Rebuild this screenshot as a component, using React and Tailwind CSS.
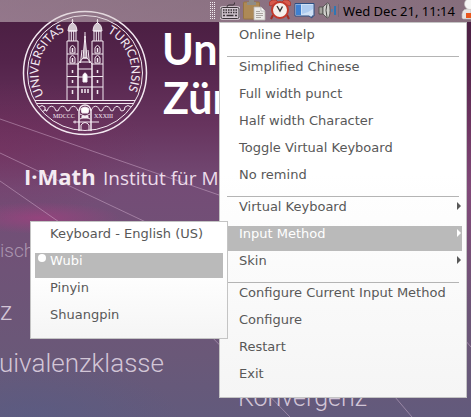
const MENU = [
  [{ label: "Online Help" }],
  [
    { label: "Simplified Chinese" },
    { label: "Full width punct" },
    { label: "Half width Character" },
    { label: "Toggle Virtual Keyboard" },
    { label: "No remind" },
  ],
  [
    { label: "Virtual Keyboard", arrow: true },
    {
      label: "Input Method",
      arrow: true,
      active: true,
      children: [
        { label: "Keyboard - English (US)" },
        { label: "Wubi", active: true, checked: true },
        { label: "Pinyin" },
        { label: "Shuangpin" },
      ],
    },
    { label: "Skin", arrow: true },
  ],
  [
    { label: "Configure Current Input Method" },
    { label: "Configure" },
    { label: "Restart" },
    { label: "Exit" },
  ],
];

const PANEL = "border border-[#c4c4c4] bg-linear-to-b from-white from-40% to-[#f5f5f5] px-1 pt-1 pb-1.5";

function MenuItem({ item }) {
  return (
    <li role="none" className="relative mb-0.5 last:mb-0">
      <button
        type="button"
        role={item.checked ? "menuitemradio" : "menuitem"}
        aria-checked={item.checked ? true : undefined}
        aria-haspopup={item.arrow ? "menu" : undefined}
        className={`relative flex h-[25px] w-full items-start pl-[15px] text-left whitespace-nowrap leading-[15px] ${
          item.active ? "bg-[#bababa] text-white" : "text-[#585858]"
        }`}
      >
        {item.checked && <span className="absolute top-[1px] left-[3px] size-2 rounded-full bg-white" />}
        <span className="grow">{item.label}</span>
        {item.arrow && (
          <svg viewBox="0 0 4 8" className="mt-[3px] mr-px h-2 w-1" fill="currentColor">
            <path d="M0 0 L4 4 L0 8 Z" />
          </svg>
        )}
      </button>
      {item.children && (
        <ul role="menu" aria-label={item.label} className={`absolute -top-[5px] right-full -mr-1 w-[198px] ${PANEL}`}>
          {item.children.map((child) => (
            <MenuItem key={child.label} item={child} />
          ))}
        </ul>
      )}
    </li>
  );
}

function Tower({ x }) {
  return (
    <g transform={`translate(${x} 0)`}>
      <path d="M0 100 V41 H11 V100 M2 41 V31 H9 V41 M4.300 31 V41 M6.700 31 V41 M0 54 H11 M0 64 H11 M0 76.500 H11 M0 87 H11" />
      <path d="M1 31 Q1.500 24 5.500 23 Q9.500 24 10 31 Z" fill="#fff" fillOpacity=".75" />
      <path d="M5.500 23 V19 M4.500 21 H6.500" />
      <path d="M3 53 V48 Q5.500 43 8 48 V53 Z M3 63 V58 Q5.500 53 8 58 V63 Z" />
      <path d="M5.500 48 V52 M5.500 58 V62 M5.500 70 V73 M5.500 80 V83 M5.500 90 V94" strokeWidth="1.500" />
    </g>
  );
}

function Seal() {
  return (
    <g fill="none" stroke="#f4eaf2" strokeWidth="1">
      <circle cx="85" cy="73" r="61.500" strokeWidth="1.500" />
      <circle cx="85" cy="73" r="57.500" />
      <Tower x="67" />
      <Tower x="92" />
      {/* nave and spire between the towers */}
      <path d="M78 100 V64 L83 58 H87 L92 64 V100 M78 69 H92 M78 77 H92 M78 87 H92 M79 62 H91" />
      <path d="M83 58 L85 36 L87 58 Z" fill="#fff" fillOpacity=".6" />
      <path d="M85 38 V32 M80.500 63 L82 50 M89.500 63 L88 50" />
      <path d="M83 82 V75 Q85 71 87 75 V82 Z" fill="#fff" />
      <path d="M82 89 V93 M85 89 V93 M88 89 V93" strokeWidth="1.500" />
      {/* bridge */}
      <path d="M35 100.500 H135 M37 103.500 H133" />
      <path d="M39 107 Q42 104 45 107 V110 Q45 111 43 111 M47 111 Q45 111 45 109 M46 111 Q48 111 48 108.500 Q51.500 104 55 108.500 Q55 111 57 111 Q59 111 59 108.500 Q62.500 104 66 108.500 Q66 111 68 111 Q70 111 70 108.500 Q73.500 104 77 108.500 L78 111" />
      <path d="M131 107 Q128 104 125 107 Q125 111 122 111 Q120 111 120 108.500 Q117 104 114 108.500 Q114 111 112 111 Q110 111 110 108.500 Q106.500 104 103 108.500 Q103 111 101 111 Q99 111 99 108.500 Q95.500 104 92 108.500 L91 111" />
      <path d="M79 131 V111 Q80 105 85 105 Q90 105 91 111 V131" strokeWidth="1.500" />
      <path d="M81 109 Q85 105 89 109 L88 113 H82 Z M82 116 H88 V118 H82 Z" fill="#fff" />
      <path d="M81 131 V125 Q85 120 89 125 V131 M73 122 H99 M75 120.500 V123.500 M80 114 L90 119 M90 114 L80 119" />
      <g fill="#f4eaf2" stroke="none" className="font-['Lato']">
        <path id="seal-left" d="M44 95 A46 46 0 0 1 85 27" fill="none" />
        <path id="seal-right" d="M85 27 A46 46 0 0 1 122 101" fill="none" />
        <text fontSize="12">
          <textPath href="#seal-left" startOffset="0">UNIVERSITAS</textPath>
        </text>
        <text fontSize="12">
          <textPath href="#seal-right" startOffset="23">TURICENSIS</textPath>
        </text>
        <text x="53" y="118" fontSize="6" className="font-['Liberation_Serif']">MDCCC</text>
        <text x="94" y="118" fontSize="6" className="font-['Liberation_Serif']">XXXIII</text>
      </g>
    </g>
  );
}

function Wallpaper() {
  return (
    <svg viewBox="0 0 471 417" preserveAspectRatio="xMinYMin slice" className="absolute inset-0 h-full w-full">
      <defs>
        <linearGradient id="sky" x1="0" y1="0" x2="0" y2="1">
          <stop offset="0" stopColor="#471d3f" />
          <stop offset=".15" stopColor="#54244b" />
          <stop offset=".3" stopColor="#67345e" />
          <stop offset=".45" stopColor="#744c76" />
          <stop offset=".65" stopColor="#6f5377" />
          <stop offset=".85" stopColor="#6a5878" />
          <stop offset="1" stopColor="#625a7c" />
        </linearGradient>
        <radialGradient id="pink">
          <stop offset="0" stopColor="#a63e80" stopOpacity=".65" />
          <stop offset="1" stopColor="#a63e80" stopOpacity="0" />
        </radialGradient>
        <radialGradient id="blue">
          <stop offset="0" stopColor="#585c84" stopOpacity=".7" />
          <stop offset="1" stopColor="#585c84" stopOpacity="0" />
        </radialGradient>
        <radialGradient id="plum">
          <stop offset="0" stopColor="#7d2456" stopOpacity=".35" />
          <stop offset="1" stopColor="#7d2456" stopOpacity="0" />
        </radialGradient>
      </defs>
      <rect width="471" height="417" fill="url(#sky)" />
      <ellipse cx="0" cy="150" rx="150" ry="70" fill="url(#plum)" />
      <ellipse cx="40" cy="218" rx="80" ry="16" fill="url(#pink)" />
      <ellipse cx="30" cy="420" rx="150" ry="60" fill="url(#blue)" />
      <ellipse cx="471" cy="190" rx="30" ry="120" fill="url(#pink)" opacity=".4" />
      <g stroke="#e8c8e4" strokeOpacity=".4">
        <path d="M0 119 L219 195 M0 153 L150 224 M0 181 L62 224 M205 330 L290 417 M395 397 L412 417 M465 340 L471 347" fill="none" />
      </g>
      <Seal />
      <g fill="#fff" fontSize="43" fontWeight="700" className="font-['Lato']">
        <text x="162" y="65">Un</text>
        <text x="163" y="114">Zür</text>
      </g>
      <g className="font-['Open_Sans']">
        <text x="24" y="185" fontSize="22" fontWeight="700" fill="#f4ebf2">I·Math</text>
        <text x="103" y="185" fontSize="19" fill="#ecdcea">Institut für M</text>
      </g>
      <g fill="#e6dbe8" fillOpacity=".85" fontWeight="300" className="font-['Roboto']">
        <text x="0" y="257" fontSize="19" opacity=".6">isch</text>
        <text x="0" y="320" fontSize="25">z</text>
        <text x="-1" y="372" fontSize="26">uivalenzklasse</text>
        <text x="238" y="406" fontSize="25">Konvergenz</text>
      </g>
    </svg>
  );
}

function GripIcon() {
  const rows = [2, 4, 6, 8, 10, 12, 14, 16, 18];
  return (
    <svg viewBox="0 0 8 22" className="h-[22px] w-2" fill="#f3eef2">
      {rows.map((y) => (
        <path key={y} d={`M1 ${y} h1 v1 h-1 z M3 ${y} h1 v1 h-1 z M5 ${y} h1 v1 h-1 z`} />
      ))}
    </svg>
  );
}

function KeyboardIcon() {
  return (
    <svg viewBox="0 0 20 22" className="h-[22px] w-5" fill="none" stroke="#3b3439">
      <rect x="1" y="7.500" width="18" height="11" rx="1.500" fill="#cbbfc8" stroke="#ddd3da" strokeWidth="2.500" />
      <rect x="1" y="7.500" width="18" height="11" rx="1.500" />
      <path d="M7 7 Q7 5 9 5 H13 Q15 5 14.500 2.500" />
      <path d="M3 10 H17 M3 12.500 H17" strokeWidth="1.500" strokeDasharray="1.500 1" />
      <path d="M3 15.500 H5 M6.500 15.500 H13.500 M15 15.500 H17" strokeWidth="1.500" />
    </svg>
  );
}

function ClipboardIcon() {
  return (
    <svg viewBox="0 0 23 22" className="h-[22px] w-[23px]">
      <rect x="0.500" y="2" width="16" height="17" rx="1" fill="#ad8956" stroke="#977444" />
      <path d="M4 5 V2 H6 V0 H11 V2 H13 V5 Z" fill="#8f8c86" />
      <path d="M11 7 H18 L22 11 V20 H11 Z" fill="#ecebe8" stroke="#b6b2ae" strokeWidth=".800" />
      <path d="M18 7 V11 H22" fill="#fff" stroke="#aaa" strokeWidth=".700" />
      <path d="M13 11.500 H17 M13 13.500 H20 M13 15.500 H20 M13 17.500 H18" stroke="#aaa5a0" />
    </svg>
  );
}

function AlarmIcon() {
  return (
    <svg viewBox="0 0 22 22" className="h-[22px] w-[22px]">
      <path d="M4 15 L2 19 M18 15 L20 19" stroke="#a32d22" strokeWidth="2" />
      <path d="M0 5 Q0 -1 7 0 L9 2 L2 6 Z M22 5 Q22 -1 15 0 L13 2 L20 6 Z" fill="#d6594c" stroke="#a32d22" strokeWidth=".700" />
      <circle cx="11" cy="10" r="8" fill="#f5f0ec" stroke="#c4392b" strokeWidth="2" />
      <path d="M8 6 L11 11 L13.500 6.500" fill="none" stroke="#333" strokeWidth="1.400" />
    </svg>
  );
}

function BubbleIcon() {
  return (
    <svg viewBox="0 0 21 22" className="h-[22px] w-[21px]">
      <path d="M1 3.500 H20 V16 H18 V18 L15 16 H1 Z" fill="#cfe0f5" stroke="#2c4f83" />
      <path d="M2 4.500 H7 V15 H2 Z" fill="#3f7fd0" />
      <path d="M8 5 H19 V9 Q14 13 8 14 Z" fill="#aecbf0" />
    </svg>
  );
}

function SpeakerIcon() {
  return (
    <svg viewBox="0 0 21 22" className="h-[22px] w-[21px]">
      <path d="M1 7 H5 V14 H1 Z" fill="#a4a39d" stroke="#4a4947" strokeWidth=".800" />
      <path d="M5 7 L9 3 Q12 2 12 10.500 Q12 18 9 18 L5 14 Z" fill="#cfceca" stroke="#4a4947" strokeWidth=".800" />
      <path d="M9 4 Q7 10 9 17" fill="none" stroke="#4a4947" />
      <path d="M14 9 V12" stroke="#3f83bc" strokeWidth="1.500" />
      <path d="M17 6 V15" stroke="#2e76b4" strokeWidth="2" />
      <path d="M20.500 4 V17" stroke="#6e6070" strokeOpacity=".6" />
    </svg>
  );
}

function UserIcon() {
  return (
    <svg viewBox="0 0 10 22" className="h-[22px] w-2.5">
      <path d="M1 18 Q0 9 6 9 H10 V19 H2 Z" fill="#e6e4e2" stroke="#b5b0ae" strokeWidth=".600" />
      <circle cx="9" cy="4" r="5.500" fill="#f5f5f4" stroke="#c5c0c0" strokeWidth=".600" />
      <rect x="5" y="13" width="5" height="5" fill="#e8561c" />
    </svg>
  );
}

const TRAY = [
  { name: "Input method", Icon: KeyboardIcon },
  { name: "Clipboard", Icon: ClipboardIcon },
  { name: "Alarm clock", Icon: AlarmIcon },
  { name: "Display", Icon: BubbleIcon },
  { name: "Volume", Icon: SpeakerIcon },
];

export default function App() {
  return (
    <div className="relative flex min-h-screen flex-col overflow-hidden bg-[#625a7c] font-['DejaVu_Sans',sans-serif] text-[13px]">
      <Wallpaper />

      <header className="relative flex h-[22px] items-center justify-end bg-linear-to-r from-[#dccfd3]/50 to-[#b9b0ae]/55">
        <div className="flex items-center gap-[3px]">
          <GripIcon />
          {TRAY.map(({ name, Icon }) => (
            <button key={name} type="button" aria-label={name}>
              <Icon />
            </button>
          ))}
        </div>
        <time className="mr-1.5 ml-1 font-['Noto_Sans',sans-serif] text-[13px] leading-[22px] whitespace-nowrap text-black">
          Wed Dec 21, 11:14
        </time>
        <button type="button" aria-label="User menu">
          <UserIcon />
        </button>
      </header>

      <nav aria-label="Input method menu" className={`relative mr-1 w-[248px] self-end ${PANEL}`}>
        {MENU.map((group, i) => (
          <div key={i}>
            {i > 0 && <hr className="mx-[3px] mt-1 mb-0.5 border-[#b4b4b4]" />}
            <ul role="menu">
              {group.map((item) => (
                <MenuItem key={item.label} item={item} />
              ))}
            </ul>
          </div>
        ))}
      </nav>
    </div>
  );
}
